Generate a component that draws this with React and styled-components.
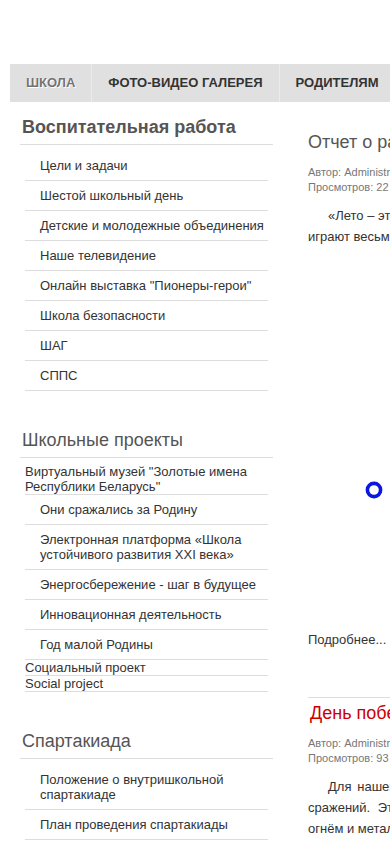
import React from 'react';
import styled, { createGlobalStyle } from 'styled-components';

const GlobalStyle = createGlobalStyle`
    html, body {
        margin: 0;
        padding: 0;
        overflow: hidden;
        background: #fff;
    }
    body {
        font-family: "Liberation Sans", Arial, sans-serif;
        color: #333;
    }
`;

const Page = styled.div`
    width: 1000px;
    padding: 64px 0 0 10px;
`;

const NavBar = styled.ul`
    display: flex;
    margin: 0;
    padding: 0;
    list-style: none;
    height: 38px;
    background: #e0e0e0;
`;

const NavItem = styled.li`
    padding: 0 16px;
    line-height: 38px;
    font-size: 13px;
    font-weight: bold;
    text-transform: uppercase;
    color: ${ props => props.active ? '#737373' : '#333' };
    text-shadow: ${ props => props.active ? '1px 1px 0 #fff, 0 0 1px #fff' : 'none' };
    border-left: ${ props => props.first ? 'none' : '1px solid #ebebeb' };
    cursor: pointer;
`;

const Main = styled.div`
    display: flex;
    align-items: flex-start;
    padding-left: 10px;
`;

const Sidebar = styled.div`
    width: 253px;
    flex-shrink: 0;
    padding-top: 14px;
`;

const Module = styled.div`
    margin-bottom: 38px;
`;

const ModuleTitle = styled.h3`
    margin: 0;
    padding: 0 0 6px 2px;
    font-size: 18px;
    line-height: 22px;
    font-weight: ${ props => props.bold ? 'bold' : 'normal' };
    color: #555;
    border-bottom: 1px solid #ddd;
`;

const Menu = styled.ul`
    margin: 0 5px;
    padding: 6px 0 0;
    list-style: none;
`;

const MenuItem = styled.li`
    border-bottom: 1px solid #ddd;
    font-size: 13px;
    line-height: 15px;
    color: #333;
    padding: ${ props => props.top ? '0' : '7px 0 7px 15px' };
    cursor: pointer;
`;

const Content = styled.div`
    width: 640px;
    margin-left: 35px;
    padding-top: 29px;
`;

const Article = styled.div`
    border-top: ${ props => props.separated ? '1px solid #ddd' : 'none' };
    padding-top: ${ props => props.separated ? '4px' : '0' };
    margin-bottom: 47px;
`;

const ArticleTitle = styled.h2`
    margin: 0 0 12px;
    padding-left: ${ props => props.red ? '2px' : '0' };
    font-size: 18px;
    line-height: 22px;
    font-weight: normal;
    color: ${ props => props.red ? '#cc0000' : '#555' };
    white-space: nowrap;
`;

const Meta = styled.div`
    font-size: 11px;
    line-height: 15px;
    color: #777;
    margin-bottom: 10px;
`;

const Paragraph = styled.div`
    font-size: 13px;
    line-height: 21px;
    color: #333;
`;

// one printed line of an article; justify stretches it to the column
const Line = styled.span`
    display: block;
    text-indent: ${ props => props.indent ? '20px' : '0' };
    text-align: justify;
    text-align-last: ${ props => props.justify ? 'justify' : 'left' };
    white-space: ${ props => props.justify ? 'normal' : 'nowrap' };
`;

const Media = styled.div`
    width: 132px;
    height: 382px;
    box-sizing: border-box;
    padding-top: 234px;
    display: flex;
    justify-content: center;
    align-items: flex-start;
`;

const ReadMore = styled.div`
    font-size: 13px;
    line-height: 21px;
    color: #333;
`;

const Spinner = () => (
    <svg width="18" height="18" viewBox="0 0 18 18">
        <circle cx="9" cy="9" r="6.6" fill="none" stroke="#0b17e0" strokeWidth="3.6" />
    </svg>
);

const nav = ['Школа', 'Фото-видео галерея', 'Родителям', 'Учащимся', 'Контакты'];

const modules = [
    {
        title: 'Воспитательная работа',
        bold: true,
        items: [
            { text: 'Цели и задачи' },
            { text: 'Шестой школьный день' },
            { text: 'Детские и молодежные объединения' },
            { text: 'Наше телевидение' },
            { text: 'Онлайн выставка "Пионеры-герои"' },
            { text: 'Школа безопасности' },
            { text: 'ШАГ' },
            { text: 'СППС' }
        ]
    },
    {
        title: 'Школьные проекты',
        items: [
            { text: 'Виртуальный музей "Золотые имена Республики Беларусь"', top: true },
            { text: 'Они сражались за Родину' },
            { text: 'Электронная платформа «Школа устойчивого развития XXI века»' },
            { text: 'Энергосбережение - шаг в будущее' },
            { text: 'Инновационная деятельность' },
            { text: 'Год малой Родины' },
            { text: 'Социальный проект', top: true },
            { text: 'Social project', top: true }
        ]
    },
    {
        title: 'Спартакиада',
        items: [
            { text: 'Положение о внутришкольной спартакиаде' },
            { text: 'План проведения спартакиады' }
        ]
    }
];

export default function App() {
    return (
        <Page>
            <GlobalStyle />
            <NavBar>
                { nav.map((item, i) => (
                    <NavItem key={ item } first={ i === 0 } active={ i === 0 }>{ item }</NavItem>
                )) }
            </NavBar>
            <Main>
                <Sidebar>
                    { modules.map(module => (
                        <Module key={ module.title }>
                            <ModuleTitle bold={ module.bold }>{ module.title }</ModuleTitle>
                            <Menu>
                                { module.items.map(item => (
                                    <MenuItem key={ item.text } top={ item.top }>{ item.text }</MenuItem>
                                )) }
                            </Menu>
                        </Module>
                    )) }
                </Sidebar>
                <Content>
                    <Article>
                        <ArticleTitle>Отчет о работе летнего оздоровительного лагеря</ArticleTitle>
                        <Meta>
                            Автор: Administrator<br />
                            Просмотров: 22
                        </Meta>
                        <Paragraph>
                            <Line indent>«Лето – это маленькая жизнь». Летние каникулы – пора отдыха и новых открытий, и они для детей</Line>
                            <Line>играют весьма важную роль в укреплении здоровья, развитии творческих способностей и личности.</Line>
                        </Paragraph>
                        <Media>
                            <Spinner />
                        </Media>
                        <ReadMore>Подробнее... , Администрация школы</ReadMore>
                    </Article>
                    <Article separated>
                        <ArticleTitle red>День победы</ArticleTitle>
                        <Meta>
                            Автор: Administrator<br />
                            Просмотров: 93
                        </Meta>
                        <Paragraph>
                            <Line indent justify>Для нашего народа 9 Мая – это святой день, день памяти о тех, кто не вернулся домой с полей</Line>
                            <Line justify>сражений. Это день скорби и гордости за тех, кто прошёл сквозь долгие годы войны, опалённые</Line>
                            <Line>огнём и металлом, и подарил нам мирное небо над головой. Мы помним и гордимся.</Line>
                        </Paragraph>
                    </Article>
                </Content>
            </Main>
        </Page>
    );
}
